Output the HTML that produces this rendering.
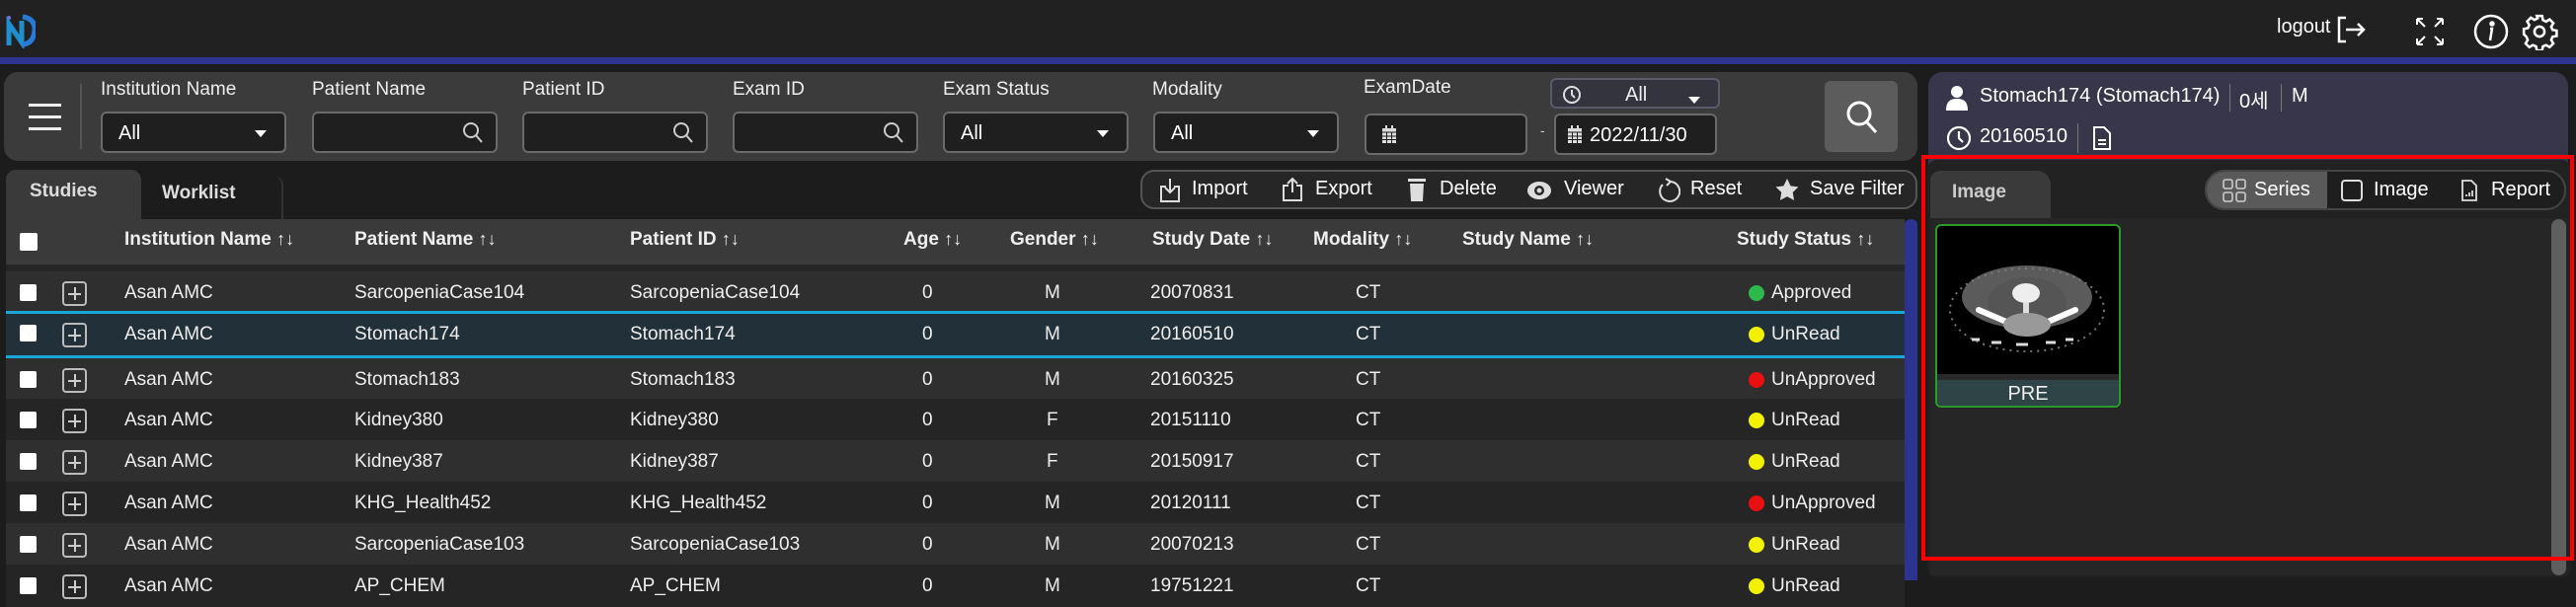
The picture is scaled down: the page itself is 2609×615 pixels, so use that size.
<!DOCTYPE html>
<html><head><meta charset="utf-8">
<style>
*{box-sizing:border-box;margin:0;padding:0}
body{width:2609px;height:588px;overflow:hidden;background:#1c1c1c;font-family:"Liberation Sans","Noto Sans CJK KR",sans-serif;color:#eee;position:relative}
.a{position:absolute}
.lbl{position:absolute;top:80px;font-size:19px;color:#eee}
.inp{position:absolute;top:113px;height:42px;background:#1f1f1f;border:2px solid #6a6a6a;border-radius:6px;font-size:20px;color:#fff;padding:9px 16px}
.dd::after{content:"";position:absolute;right:18px;top:17px;border-left:6px solid transparent;border-right:6px solid transparent;border-top:7px solid #fff}
.mag{position:absolute;right:12px;top:8px}
.th{position:absolute;top:232px;font-size:19px;font-weight:bold;color:#eee;white-space:nowrap}
.th span{font-weight:normal;font-size:18px}
.row{position:absolute;left:6px;width:1923px;height:43px;font-size:19px}
.row div{position:absolute;top:11px;white-space:nowrap}
.cb{position:absolute;left:14px!important;top:13px!important;width:17px;height:17px;background:#fff;border-radius:2px}
.pl{position:absolute;left:57px!important;top:10px!important;width:25px;height:25px;border:2px solid #bbb;border-radius:4px}
.pl::before{content:"";position:absolute;left:10px;top:4px;width:1.5px;height:13px;background:#ccc}
.pl::after{content:"";position:absolute;left:4px;top:10px;width:13px;height:1.5px;background:#ccc}
.dot{position:absolute;width:16px;height:16px;border-radius:50%;top:14px!important}
.tb{position:absolute;top:180px;font-size:20px;color:#fff}
</style></head><body>
<!-- top bar -->
<div class="a" style="left:0;top:0;width:2609px;height:58px;background:#212121"></div>
<div class="a" style="left:0;top:58px;width:2609px;height:7px;background:#2e3592"></div>
<svg class="a" style="left:6px;top:13px" width="30" height="36" viewBox="0 0 30 36"><rect x="1" y="3" width="4" height="4" rx="2" fill="#7b6fd6"/><path d="M3 33 L3 11 L16 30 L16 8" stroke="#1f8fd0" stroke-width="5" fill="none"/><path d="M17 4 Q30 6 29 18 Q28 31 17 32" stroke="#2a7ad8" stroke-width="5" fill="none"/></svg>
<div class="a" style="left:2306px;top:16px;font-size:20px;color:#fff">logout</div>
<svg class="a" style="left:2366px;top:14px" width="32" height="32" viewBox="0 0 32 32" fill="none" stroke="#fff" stroke-width="2.5"><path d="M10 4H3v24h7"/><path d="M10 16h18M22 10l6 6-6 6"/></svg>
<svg class="a" style="left:2445px;top:16px" width="32" height="32" viewBox="0 0 32 32" fill="none" stroke="#fff" stroke-width="2"><path d="M3 3l8 8M3 3v6M3 3h6M29 3l-8 8M29 3v6M29 3h-6M3 29l8-8M3 29v-6M3 29h6M29 29l-8-8M29 29v-6M29 29h-6"/></svg>
<svg class="a" style="left:2504px;top:13px" width="38" height="38" viewBox="0 0 38 38" fill="none" stroke="#fff" stroke-width="2.5"><circle cx="19" cy="19" r="16"/><circle cx="20" cy="11" r="1.5" fill="#fff"/><path d="M18 16h2l-2 12"/></svg>
<svg class="a" style="left:2553px;top:13px" width="38" height="38" viewBox="0 0 24 24" fill="none" stroke="#fff" stroke-width="1.6"><circle cx="12" cy="12" r="3.2"/><path d="M10.3 2h3.4l.5 2.6 2 1 2.3-1.4 2.4 2.4-1.4 2.3.9 2 2.6.5v3.4l-2.6.5-.9 2 1.4 2.3-2.4 2.4-2.3-1.4-2 .9-.5 2.6h-3.4l-.5-2.6-2-.9-2.3 1.4-2.4-2.4 1.4-2.3-.9-2L2 13.7v-3.4l2.6-.5.9-2-1.4-2.3 2.4-2.4 2.3 1.4 2-1z"/></svg>

<!-- filter panel -->
<div class="a" style="left:4px;top:73px;width:1938px;height:90px;background:#3b3b3b;border-radius:14px"></div>
<div class="a" style="left:29px;top:105px;width:33px;height:3px;background:#eee"></div>
<div class="a" style="left:29px;top:117px;width:33px;height:3px;background:#eee"></div>
<div class="a" style="left:29px;top:129px;width:33px;height:3px;background:#eee"></div>
<div class="a" style="left:81px;top:85px;width:2px;height:66px;background:#555"></div>
<div class="lbl" style="left:102px">Institution Name</div>
<div class="lbl" style="left:316px">Patient Name</div>
<div class="lbl" style="left:529px">Patient ID</div>
<div class="lbl" style="left:742px">Exam ID</div>
<div class="lbl" style="left:955px">Exam Status</div>
<div class="lbl" style="left:1167px">Modality</div>
<div class="lbl" style="left:1381px;top:78px">ExamDate</div>
<div class="inp dd" style="left:102px;width:188px">All</div>
<div class="inp" style="left:316px;width:188px"><svg class="mag" width="22" height="24" viewBox="0 0 22 24" fill="none" stroke="#ccc" stroke-width="2"><circle cx="9" cy="9" r="7"/><path d="M14 14l6 7"/></svg></div>
<div class="inp" style="left:529px;width:188px"><svg class="mag" width="22" height="24" viewBox="0 0 22 24" fill="none" stroke="#ccc" stroke-width="2"><circle cx="9" cy="9" r="7"/><path d="M14 14l6 7"/></svg></div>
<div class="inp" style="left:742px;width:188px"><svg class="mag" width="22" height="24" viewBox="0 0 22 24" fill="none" stroke="#ccc" stroke-width="2"><circle cx="9" cy="9" r="7"/><path d="M14 14l6 7"/></svg></div>
<div class="inp dd" style="left:955px;width:188px">All</div>
<div class="inp dd" style="left:1168px;width:188px">All</div>
<div class="inp" style="left:1382px;width:165px;top:115px"><svg class="a" style="left:16px;top:10px" width="14" height="18" viewBox="0 0 14 18"><rect x="0" y="3" width="14" height="15" fill="#ddd"/><rect x="3" y="0" width="2" height="4" fill="#ddd"/><rect x="9" y="0" width="2" height="4" fill="#ddd"/><path d="M0 7h14M0 11h14M0 14.5h14M4.5 7v11M9.5 7v11" stroke="#1f1f1f" stroke-width="1"/></svg></div>
<div class="a" style="left:1560px;top:124px;font-size:14px;color:#ccc">-</div>
<div class="inp" style="left:1574px;width:165px;top:115px;padding-left:34px">2022/11/30<svg class="a" style="left:12px;top:10px" width="14" height="18" viewBox="0 0 14 18"><rect x="0" y="3" width="14" height="15" fill="#ddd"/><rect x="3" y="0" width="2" height="4" fill="#ddd"/><rect x="9" y="0" width="2" height="4" fill="#ddd"/><path d="M0 7h14M0 11h14M0 14.5h14M4.5 7v11M9.5 7v11" stroke="#1f1f1f" stroke-width="1"/></svg></div>
<div class="a dd" style="left:1570px;top:79px;width:172px;height:31px;background:#34343f;border:2px solid #5a5a6a;border-radius:6px;font-size:20px;padding:4px 0 0 74px">All<svg class="a" style="left:10px;top:4px" width="20" height="22" viewBox="0 0 20 22" fill="none" stroke="#ddd" stroke-width="2"><circle cx="10" cy="11" r="8"/><path d="M10 6v5l3 3"/></svg></div>
<div class="a" style="left:1848px;top:82px;width:74px;height:72px;background:#5c5c5c;border-radius:6px"><svg class="a" style="left:20px;top:18px" width="36" height="38" viewBox="0 0 36 38" fill="none" stroke="#fff" stroke-width="3"><circle cx="15" cy="15" r="11"/><path d="M23 24l9 10"/></svg></div>

<!-- tabs -->
<div class="a" style="left:6px;top:172px;width:137px;height:50px;background:#3a3a3a;border-radius:10px 10px 0 0"></div>
<div class="a" style="left:30px;top:183px;font-size:19px;font-weight:bold;color:#ddd">Studies</div>
<div class="a" style="left:143px;top:178px;width:144px;height:44px;border-right:2px solid #333;border-radius:0 10px 0 0"></div>
<div class="a" style="left:164px;top:185px;font-size:19px;font-weight:bold;color:#ddd">Worklist</div>
<!-- toolbar -->
<div class="a" style="left:1155px;top:172px;width:787px;height:40px;border:2px solid #555;border-radius:14px;background:#262626"></div>
<svg class="a" style="left:1174px;top:180px" width="22" height="26" viewBox="0 0 22 26" fill="none" stroke="#ddd" stroke-width="2"><path d="M7 9H2v15h18V9h-5M11 1v14M6 10l5 5 5-5"/></svg>
<div class="tb" style="left:1207px">Import</div>
<svg class="a" style="left:1298px;top:179px" width="22" height="26" viewBox="0 0 22 26" fill="none" stroke="#ddd" stroke-width="2"><path d="M7 9H2v15h18V9h-5M11 16V2M6 7l5-5 5 5"/></svg>
<div class="tb" style="left:1332px">Export</div>
<svg class="a" style="left:1426px;top:180px" width="18" height="25" viewBox="0 0 18 25" fill="#ddd"><rect x="0" y="1" width="18" height="3"/><path d="M2 6h14l-1 18H3z"/></svg>
<div class="tb" style="left:1458px">Delete</div>
<svg class="a" style="left:1547px;top:183px" width="24" height="20" viewBox="0 0 24 20"><ellipse cx="12" cy="10" rx="12" ry="9" fill="#ddd"/><circle cx="12" cy="10" r="5" fill="#262626"/><circle cx="12" cy="10" r="2.5" fill="#ddd"/></svg>
<div class="tb" style="left:1584px">Viewer</div>
<svg class="a" style="left:1678px;top:180px" width="24" height="26" viewBox="0 0 24 26" fill="none" stroke="#ddd" stroke-width="2"><path d="M14 4a10 10 0 1 1-8 3"/><path d="M9 1l5 3-4 4"/></svg>
<div class="tb" style="left:1712px">Reset</div>
<svg class="a" style="left:1797px;top:180px" width="26" height="25" viewBox="0 0 24 24" fill="#ddd"><path d="M12 1l3.4 7 7.6 1-5.5 5.3 1.3 7.7L12 18.4 5.2 22l1.3-7.7L1 9l7.6-1z"/></svg>
<div class="tb" style="left:1833px">Save Filter</div>

<!-- table header -->
<div class="a" style="left:6px;top:222px;width:1923px;height:46px;background:#3a3a3a"></div>
<div class="a" style="left:20px;top:236px;width:18px;height:18px;background:#fff;border-radius:2px"></div>
<div class="th" style="left:126px">Institution Name <span>↑↓</span></div>
<div class="th" style="left:359px">Patient Name <span>↑↓</span></div>
<div class="th" style="left:638px">Patient ID <span>↑↓</span></div>
<div class="th" style="left:915px">Age <span>↑↓</span></div>
<div class="th" style="left:1023px">Gender <span>↑↓</span></div>
<div class="th" style="left:1167px">Study Date <span>↑↓</span></div>
<div class="th" style="left:1330px">Modality <span>↑↓</span></div>
<div class="th" style="left:1481px">Study Name <span>↑↓</span></div>
<div class="th" style="left:1759px">Study Status <span>↑↓</span></div>
<div class="a" style="left:6px;top:268px;width:1923px;height:7px;background:#262626"></div>
<div class="a" style="left:1929px;top:222px;width:13px;height:366px;background:#2c3490;border-radius:6px 6px 0 0"></div>

<!-- rows -->
<div class="row" style="top:275px;background:#2f2f2f"><span class="cb"></span><span class="pl"></span><div style="left:120px">Asan AMC</div><div style="left:353px">SarcopeniaCase104</div><div style="left:632px">SarcopeniaCase104</div><div style="left:928px">0</div><div style="left:1052px">M</div><div style="left:1159px">20070831</div><div style="left:1367px">CT</div><span class="dot" style="left:1765px;background:#2db84b"></span><div style="left:1788px">Approved</div></div>
<div class="row" style="top:315px;height:48px;background:#22303a;border-top:3px solid #1aa6d8;border-bottom:3px solid #1aa6d8"><span class="cb" style="top:11px!important"></span><span class="pl" style="top:9px!important"></span><div style="left:120px;top:10px">Asan AMC</div><div style="left:353px;top:10px">Stomach174</div><div style="left:632px;top:10px">Stomach174</div><div style="left:928px;top:10px">0</div><div style="left:1052px;top:10px">M</div><div style="left:1159px;top:10px">20160510</div><div style="left:1367px;top:10px">CT</div><span class="dot" style="left:1765px;top:13px!important;background:#f2f200"></span><div style="left:1788px;top:10px">UnRead</div></div>
<div class="row" style="top:363px;background:#2f2f2f"><span class="cb"></span><span class="pl"></span><div style="left:120px">Asan AMC</div><div style="left:353px">Stomach183</div><div style="left:632px">Stomach183</div><div style="left:928px">0</div><div style="left:1052px">M</div><div style="left:1159px">20160325</div><div style="left:1367px">CT</div><span class="dot" style="left:1765px;background:#e81010"></span><div style="left:1788px">UnApproved</div></div>
<div class="row" style="top:404px;background:#252525"><span class="cb"></span><span class="pl"></span><div style="left:120px">Asan AMC</div><div style="left:353px">Kidney380</div><div style="left:632px">Kidney380</div><div style="left:928px">0</div><div style="left:1054px">F</div><div style="left:1159px">20151110</div><div style="left:1367px">CT</div><span class="dot" style="left:1765px;background:#f2f200"></span><div style="left:1788px">UnRead</div></div>
<div class="row" style="top:446px;background:#2f2f2f"><span class="cb"></span><span class="pl"></span><div style="left:120px">Asan AMC</div><div style="left:353px">Kidney387</div><div style="left:632px">Kidney387</div><div style="left:928px">0</div><div style="left:1054px">F</div><div style="left:1159px">20150917</div><div style="left:1367px">CT</div><span class="dot" style="left:1765px;background:#f2f200"></span><div style="left:1788px">UnRead</div></div>
<div class="row" style="top:488px;background:#252525"><span class="cb"></span><span class="pl"></span><div style="left:120px">Asan AMC</div><div style="left:353px">KHG_Health452</div><div style="left:632px">KHG_Health452</div><div style="left:928px">0</div><div style="left:1052px">M</div><div style="left:1159px">20120111</div><div style="left:1367px">CT</div><span class="dot" style="left:1765px;background:#e81010"></span><div style="left:1788px">UnApproved</div></div>
<div class="row" style="top:530px;background:#2f2f2f"><span class="cb"></span><span class="pl"></span><div style="left:120px">Asan AMC</div><div style="left:353px">SarcopeniaCase103</div><div style="left:632px">SarcopeniaCase103</div><div style="left:928px">0</div><div style="left:1052px">M</div><div style="left:1159px">20070213</div><div style="left:1367px">CT</div><span class="dot" style="left:1765px;background:#f2f200"></span><div style="left:1788px">UnRead</div></div>
<div class="row" style="top:572px;background:#252525"><span class="cb"></span><span class="pl"></span><div style="left:120px">Asan AMC</div><div style="left:353px">AP_CHEM</div><div style="left:632px">AP_CHEM</div><div style="left:928px">0</div><div style="left:1052px">M</div><div style="left:1159px">19751221</div><div style="left:1367px">CT</div><span class="dot" style="left:1765px;background:#f2f200"></span><div style="left:1788px">UnRead</div></div>

<!-- right panel -->
<div class="a" style="left:1953px;top:73px;width:648px;height:512px;background:#38364a;border-radius:14px"></div>
<svg class="a" style="left:1971px;top:86px" width="22" height="26" viewBox="0 0 22 26" fill="#fff"><circle cx="11" cy="7" r="6"/><path d="M0 26c0-9 4-12 11-12s11 3 11 12z"/></svg>
<div class="a" style="left:2005px;top:86px;font-size:20px;color:#fff">Stomach174 (Stomach174)</div>
<div class="a" style="left:2258px;top:85px;width:1px;height:28px;background:#777"></div>
<div class="a" style="left:2268px;top:86px;font-size:20px;color:#fff">0세</div>
<div class="a" style="left:2310px;top:85px;width:1px;height:28px;background:#777"></div>
<div class="a" style="left:2321px;top:86px;font-size:20px;color:#fff">M</div>
<svg class="a" style="left:1971px;top:127px" width="26" height="26" viewBox="0 0 26 26" fill="none" stroke="#fff" stroke-width="2.2"><circle cx="13" cy="13" r="11"/><path d="M13 6v7l4 4"/></svg>
<div class="a" style="left:2005px;top:127px;font-size:20px;color:#fff">20160510</div>
<div class="a" style="left:2104px;top:125px;width:1px;height:30px;background:#777"></div>
<svg class="a" style="left:2119px;top:127px" width="20" height="26" viewBox="0 0 20 26" fill="none" stroke="#fff" stroke-width="2"><path d="M2 2h10l6 6v16H2z"/><path d="M6 15h8M6 19h8"/></svg>
<!-- inner image panel -->
<div class="a" style="left:1952px;top:162px;width:652px;height:423px;background:#222;border-radius:10px"></div>
<div class="a" style="left:1955px;top:173px;width:122px;height:48px;background:#3a3a3a;border-radius:10px 14px 0 0"></div>
<div class="a" style="left:1977px;top:184px;font-size:19px;font-weight:bold;color:#ccc">Image</div>
<div class="a" style="left:2233px;top:172px;width:366px;height:41px;background:#1e1e1e;border:2px solid #444;border-radius:20px;overflow:hidden"><div style="position:absolute;left:0;top:0;width:122px;height:41px;background:#5a5a5a"></div></div>
<svg class="a" style="left:2251px;top:181px" width="24" height="24" viewBox="0 0 24 24" fill="none" stroke="#ccc" stroke-width="1.6"><rect x="1" y="1" width="9" height="9" rx="2"/><rect x="14" y="1" width="9" height="9" rx="2"/><rect x="1" y="14" width="9" height="9" rx="2"/><rect x="14" y="14" width="9" height="9" rx="2"/></svg>
<div class="a" style="left:2283px;top:181px;font-size:20px;color:#fff">Series</div>
<svg class="a" style="left:2371px;top:182px" width="22" height="22" viewBox="0 0 22 22" fill="none" stroke="#ddd" stroke-width="2"><rect x="1" y="1" width="20" height="20" rx="3"/></svg>
<div class="a" style="left:2404px;top:181px;font-size:20px;color:#fff">Image</div>
<svg class="a" style="left:2492px;top:181px" width="18" height="24" viewBox="0 0 18 24" fill="none" stroke="#ddd" stroke-width="1.8"><path d="M2 2h9l5 5v15H2z"/><path d="M6 18v-2M9 18v-4M12 18v-6"/></svg>
<div class="a" style="left:2523px;top:181px;font-size:20px;color:#fff">Report</div>
<div class="a" style="left:1955px;top:221px;width:645px;height:362px;background:#262626"></div>
<div class="a" style="left:2584px;top:222px;width:15px;height:361px;background:#5f5f5f;border-radius:8px"></div>
<!-- thumbnail -->
<div class="a" style="left:1960px;top:227px;width:188px;height:186px;border:2px solid #2a9a2a;border-radius:6px;background:#000;overflow:hidden">
<svg class="a" style="left:0;top:0" width="184" height="150" viewBox="0 0 184 150"><ellipse cx="91" cy="85" rx="78" ry="42" fill="none" stroke="#777" stroke-width="2" stroke-dasharray="2 5"/><ellipse cx="91" cy="72" rx="66" ry="32" fill="#7a7a7a" opacity=".75"/><ellipse cx="91" cy="78" rx="40" ry="26" fill="#555"/><ellipse cx="90" cy="68" rx="14" ry="10" fill="#eee"/><path d="M42 85l28 12M140 85l-28 12" stroke="#fff" stroke-width="6" stroke-linecap="round"/><path d="M90 78v28" stroke="#ddd" stroke-width="6"/><ellipse cx="91" cy="100" rx="24" ry="12" fill="#999"/><path d="M35 115h8M55 118h10M80 120h12M110 118h10M130 115h8" stroke="#ddd" stroke-width="3"/></svg>
<div class="a" style="left:0;top:150px;width:184px;height:6px;background:#2a2a2a"></div>
<div class="a" style="left:0;top:156px;width:184px;height:28px;background:#2f4446;text-align:center;font-size:20px;color:#eee;padding-top:3px">PRE</div>
</div>
<!-- red box -->
<div class="a" style="left:1946px;top:157px;width:661px;height:411px;border:4px solid #ff0000"></div>
</body></html>
